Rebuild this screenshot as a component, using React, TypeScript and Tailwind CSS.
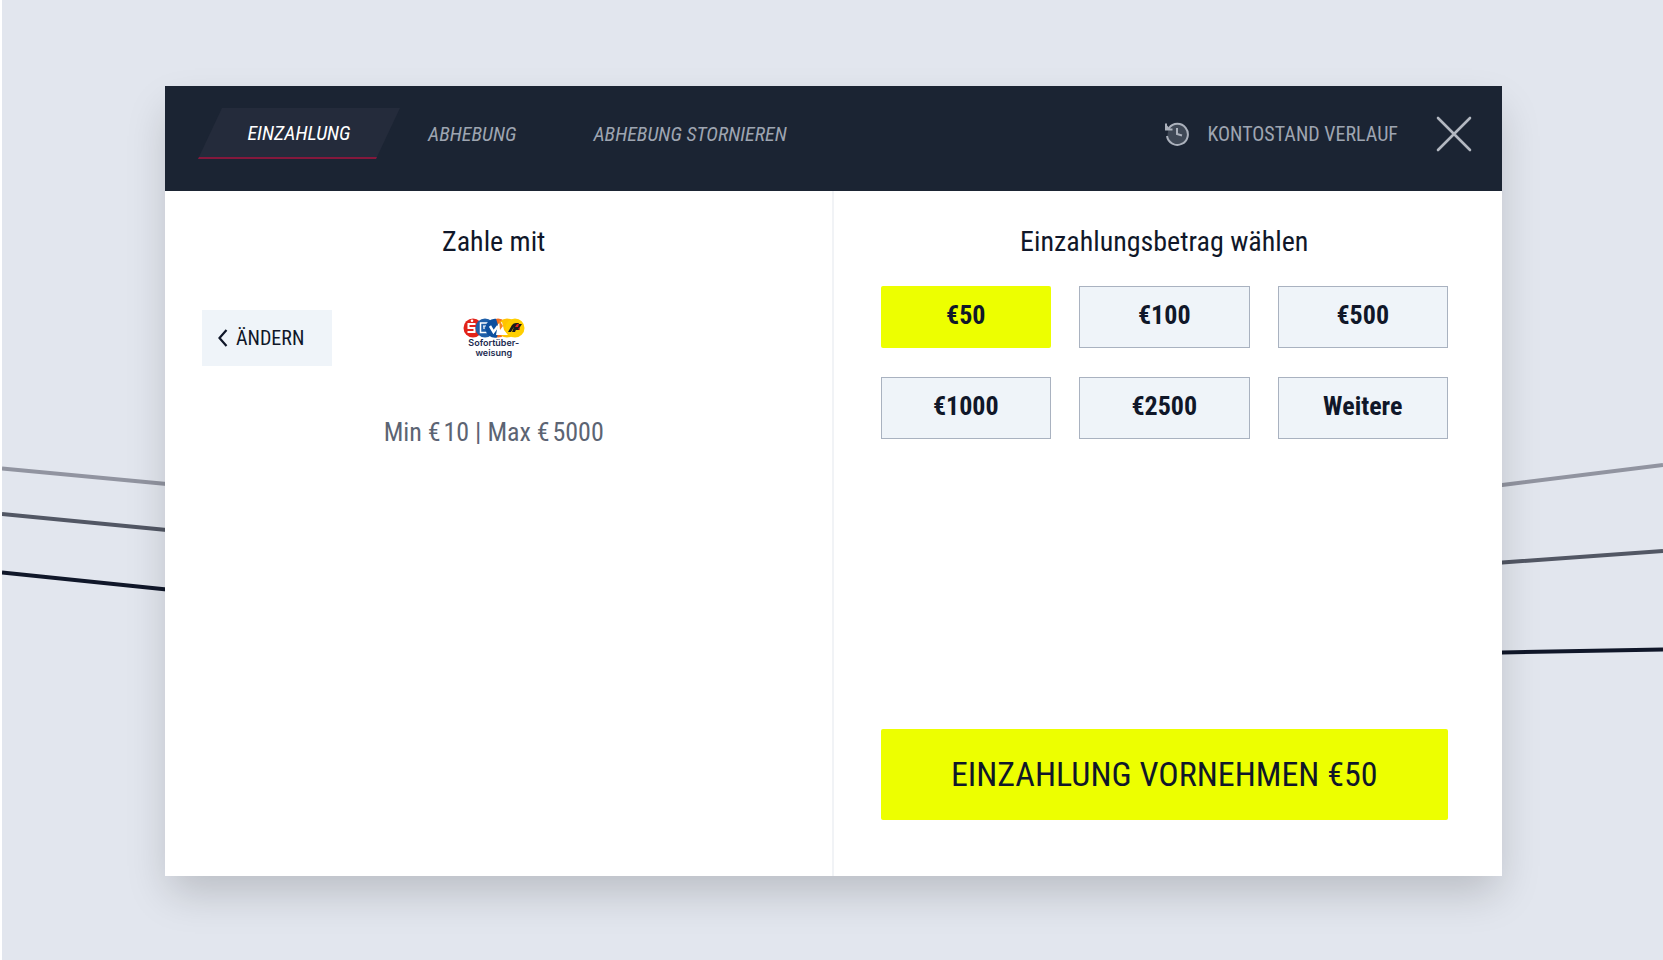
import { useState } from "react";

const amounts = ["€50", "€100", "€500", "€1000", "€2500", "Weitere"];

const tabs = ["Einzahlung", "Abhebung", "Abhebung stornieren"];

function BackgroundLines() {
  return (
    <svg
      className="absolute inset-0 h-full w-full"
      viewBox="0 0 1663 960"
      preserveAspectRatio="none"
      fill="none"
      strokeWidth="4"
      aria-hidden="true"
    >
      <path d="M0 468.500 L165 484 C600 525 1060 540 1502 485 L1663 465" stroke="#9194a0" />
      <path d="M0 514 L165 530 C600 573 1060 596 1502 562.500 L1663 551" stroke="#525764" />
      <path d="M0 572.500 L165 589.500 C600 636 1060 661 1502 652.500 L1663 649.500" stroke="#101729" />
    </svg>
  );
}

function HistoryIcon() {
  return (
    <svg className="size-6" viewBox="0 0 24 24" fill="none" aria-hidden="true">
      <circle cx="12.500" cy="12" r="10" fill="#3f4856" />
      <path d="M4 6 A10.500 10.500 0 1 1 2 14" stroke="#abb1bc" strokeWidth="2" />
      <path d="M1 1.600 V7.500 H7.500" stroke="#abb1bc" strokeWidth="2" />
      <path d="M1 2.500 L6 7.500 H1 Z" fill="#abb1bc" />
      <path d="M12 6 V12 L17 13.500" stroke="#abb1bc" strokeWidth="2" />
    </svg>
  );
}

function CloseIcon() {
  return (
    <svg className="size-9" viewBox="0 0 36 36" fill="none" aria-hidden="true">
      <path d="M2 2 L34 34 M34 2 L2 34" stroke="#b3b8c1" strokeWidth="2.600" strokeLinecap="round" />
    </svg>
  );
}

function BankLogos() {
  return (
    <svg className="h-5 w-[62px]" viewBox="0 0 62 20" aria-hidden="true">
      <circle cx="10" cy="10" r="9.500" fill="#e2231a" />
      <path d="M12.500 6 H5.500 V10 H11.500 V14 H4.500" fill="none" stroke="#fff" strokeWidth="2" />
      <circle cx="9" cy="2.800" r="1.300" fill="#fff" />
      <circle cx="22" cy="10" r="9.500" fill="#1f5fa8" />
      <path d="M17.500 5 H25 L23.500 14.500 H17.500 Z" fill="none" stroke="#fff" strokeWidth="1.500" />
      <path d="M20 8 H23 M21 8 V11" fill="none" stroke="#fff" strokeWidth="1.200" />
      <circle cx="35" cy="10" r="9.500" fill="#f36c21" />
      <path d="M33 0.700 A9.500 9.500 0 1 0 34 19.400 L36 10 Z" fill="#0d4f9e" />
      <path d="M27 8 L30.500 14 L35 8" fill="none" stroke="#fff" strokeWidth="2.500" />
      <circle cx="44" cy="10" r="9.500" fill="#ffc400" />
      <path d="M35 6 L33 17 H45 L41 12 L39 4 Z" fill="#fff" />
      <path d="M36 1.500 L40 8 L37 12 Z" fill="#f58220" />
      <circle cx="52" cy="10" r="9.500" fill="#ffcf00" />
      <path d="M45 14 L49 7 Q50.500 5 53 5 H56 L52 14 H49 L51 9 L48 14 Z" fill="#1b1b1b" />
      <path d="M53 10 L55 6 H59 L57 9 L56 12 H52 Z" fill="#1b1b1b" />
      <path d="M52 9 L54 6 H56 L55 9 Z M55 11 L57 9 V12 Z" fill="#e2231a" />
    </svg>
  );
}

export default function App() {
  const [tab, setTab] = useState("Einzahlung");
  const [amount, setAmount] = useState("€50");

  return (
    <div className="relative flex min-h-screen flex-col border-l-2 border-white bg-[#e2e6ee] pt-[86px] pr-[161px] pb-[84px] pl-[163px] font-['Roboto_Condensed','Liberation_Sans_Narrow',Roboto,sans-serif] text-[#101729]">
      <BackgroundLines />

      <main className="relative flex flex-1 flex-col bg-white shadow-[0_20px_40px_-4px_rgba(0,0,0,0.18)]">
        <header className="flex h-[105px] items-start justify-between bg-[#1b2433] pt-[22px] pr-[30px] pl-[33px]">
          <nav className="flex text-xl italic">
            {tabs.map((item) => (
              <button
                key={item}
                type="button"
                onClick={() => setTab(item)}
                className={
                  item === tab
                    ? "mr-7 h-[51px] w-[202px] border-b-2 border-[#84183c] bg-[#242b3b] text-white uppercase [clip-path:polygon(24px_0,100%_0,178px_100%,0_100%)]"
                    : "mr-[77px] h-[51px] text-[#9ea5b1] uppercase"
                }
              >
                {item}
              </button>
            ))}
          </nav>

          <div className="flex h-[51px] items-center">
            <button type="button" className="flex items-center gap-[18px] text-xl text-[#9ea5b1] uppercase">
              <HistoryIcon />
              Kontostand Verlauf
            </button>
            <button type="button" aria-label="Schließen" className="ml-[38px]">
              <CloseIcon />
            </button>
          </div>
        </header>

        <div className="grid flex-1 grid-cols-2">
          <section className="border-r-2 border-[#f1f3f6] pt-[31px] pr-[46px] pl-[37px]">
            <h2 className="text-center text-[28px] leading-10">Zahle mit</h2>
            <div className="mt-12 grid grid-cols-[1fr_auto_1fr] items-center">
              <button
                type="button"
                className="flex h-14 w-[130px] items-center gap-2 bg-[#eff4f9] pl-4 text-xl uppercase"
              >
                <svg className="h-[18px] w-[10px]" viewBox="0 0 10 18" fill="none" aria-hidden="true">
                  <path d="M8.500 1 L1.500 9 L8.500 17" stroke="currentColor" strokeWidth="2.200" />
                </svg>
                Ändern
              </button>
              <div className="flex flex-col items-center">
                <BankLogos />
                <p className="text-center font-[Inter,sans-serif] text-[9px] leading-[10px] font-semibold text-[#1c2b50]">
                  Sofortüber-
                  <br />
                  weisung
                </p>
              </div>
            </div>
            <p className="mt-12 text-center text-[26px] leading-9 text-[#5c6473]">
              Min €&#8202;10 | Max €&#8202;5000
            </p>
          </section>

          <section className="flex flex-col pt-[31px] pr-[54px] pb-14 pl-[47px]">
            <h2 className="text-center text-[28px] leading-10">Einzahlungsbetrag wählen</h2>
            <div className="mt-6 grid grid-cols-3 gap-x-7 gap-y-[29px]">
              {amounts.map((item) => (
                <button
                  key={item}
                  type="button"
                  onClick={() => setAmount(item)}
                  className={
                    item === amount
                      ? "h-[62px] rounded-xs bg-[#edff00] pb-1 text-[26px] font-bold"
                      : "h-[62px] border border-[#a9b2c0] bg-[#eff4f9] pb-1 text-[26px] font-bold"
                  }
                >
                  {item}
                </button>
              ))}
            </div>
            <button type="button" className="mt-auto h-[91px] rounded-xs bg-[#edff00] text-[34px] uppercase">
              Einzahlung vornehmen {amount}
            </button>
          </section>
        </div>
      </main>
    </div>
  );
}
